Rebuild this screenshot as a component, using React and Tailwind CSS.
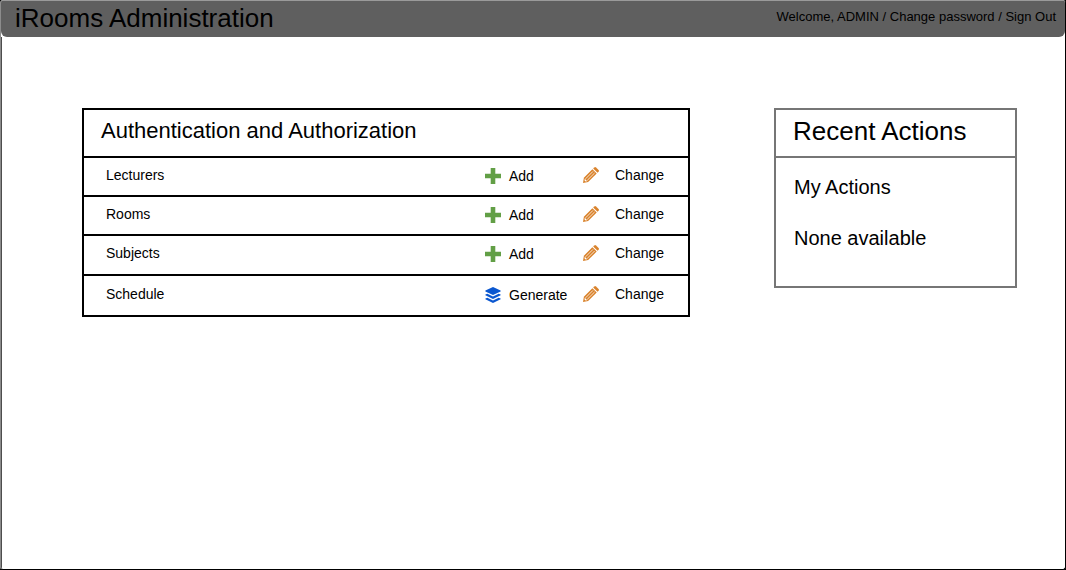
import React from "react";

function PlusIcon() {
  return (
    <svg className="size-4 shrink-0" viewBox="0 0 16 16" aria-hidden="true">
      <path d="M5.7 0h4.6v5.7H16v4.6h-5.7V16H5.7v-5.7H0V5.7h5.7z" fill="#629f46" />
    </svg>
  );
}

function LayersIcon() {
  return (
    <svg className="size-4 shrink-0" viewBox="0 0 16 16" aria-hidden="true" fill="#0b57d0">
      <path d="M8 0 15.6 3.6V4.4L8 8 .4 4.4V3.6z" />
      <path d="M.4 7.6 2.4 6.7 8 9.4l5.6-2.7 2 .9v.7L8 11.9.4 8.3z" />
      <path d="M.4 11.6 2.4 10.7 8 13.4l5.6-2.7 2 .9v.7L8 15.9.4 12.3z" />
    </svg>
  );
}

function PencilIcon() {
  return (
    <svg className="size-4 shrink-0" viewBox="0 0 16 16" aria-hidden="true">
      <path
        d="M10.2 1.5 11.3.4Q12.2-.3 13 .4L15.6 3Q16.3 3.8 15.6 4.7L14.5 5.8z"
        fill="#d9822b"
      />
      <path d="M9.4 2.3 13.7 6.6 5.1 15.1 0 16 .9 10.8z" fill="#d9822b" />
      <path
        d="M10 4.4 2.6 11.8M11.6 6 4.2 13.4"
        stroke="#fff"
        strokeWidth="0.8"
        fill="none"
      />
      <path d="M1.8 11.8 4.2 14.2 2.6 14.5 1.5 13.4z" fill="#fff" />
    </svg>
  );
}

const rows = [
  { name: "Lecturers", action: "Add", Icon: PlusIcon, height: "h-[39px]" },
  { name: "Rooms", action: "Add", Icon: PlusIcon, height: "h-[39px]" },
  { name: "Subjects", action: "Add", Icon: PlusIcon, height: "h-10" },
  { name: "Schedule", action: "Generate", Icon: LayersIcon, height: "h-[41px]" },
];

function ModelsPanel() {
  return (
    <section className="min-w-0 flex-1 border-2 border-black">
      <h2 className="px-[17px] pt-2 pb-3 text-[22px] leading-[26px]">
        Authentication and Authorization
      </h2>
      <table className="w-full table-fixed border-separate border-spacing-0 text-sm">
        <colgroup>
          <col />
          <col className="w-[98px]" />
          <col className="w-[105px]" />
        </colgroup>
        <tbody>
          {rows.map(({ name, action, Icon, height }) => (
            <tr key={name} className={height}>
              <th
                scope="row"
                className="border-t-2 border-black py-0 pr-0 pb-1 pl-[22px] text-left font-normal"
              >
                {name}
              </th>
              <td className="border-t-2 border-black p-0 pb-0.5">
                <a href="#" className="flex items-center gap-2">
                  <Icon />
                  {action}
                </a>
              </td>
              <td className="border-t-2 border-black p-0 pb-1">
                <a href="#" className="flex items-center gap-4">
                  <PencilIcon />
                  Change
                </a>
              </td>
            </tr>
          ))}
        </tbody>
      </table>
    </section>
  );
}

function RecentActions() {
  return (
    <aside className="w-[243px] shrink-0 border-2 border-[#767676]">
      <h2 className="border-b-2 border-[#767676] px-[17px] pt-1.5 pb-2.5 text-[26px] leading-[30px]">
        Recent Actions
      </h2>
      <div className="flex flex-col gap-[27px] px-[18px] pt-[17px] pb-9 text-xl leading-6">
        <h3>My Actions</h3>
        <p>None available</p>
      </div>
    </aside>
  );
}

export default function App() {
  return (
    <div className="min-h-screen bg-black font-['Liberation_Sans',Arial,sans-serif] text-black">
      <div className="flex min-h-screen flex-col overflow-hidden rounded-[3px] border-r border-b border-l border-r-black border-b-black border-l-[#8c8c8c] bg-white">
        <header className="flex items-start justify-between rounded-b-md border-t border-[#9a9a9a] bg-[#5f5f5f] pr-[9px] pb-1 pl-3.5">
          <h1 className="pt-0.5 text-[26px] leading-[30px]">iRooms Administration</h1>
          <nav className="pt-2 text-[13px] leading-4">
            Welcome, ADMIN / <a href="#">Change password</a> / <a href="#">Sign Out</a>
          </nav>
        </header>
        <main className="flex flex-1 items-start gap-[84px] border-l border-[#4d4d4d] pt-[71px] pr-12 pb-8 pl-20">
          <ModelsPanel />
          <RecentActions />
        </main>
      </div>
    </div>
  );
}
